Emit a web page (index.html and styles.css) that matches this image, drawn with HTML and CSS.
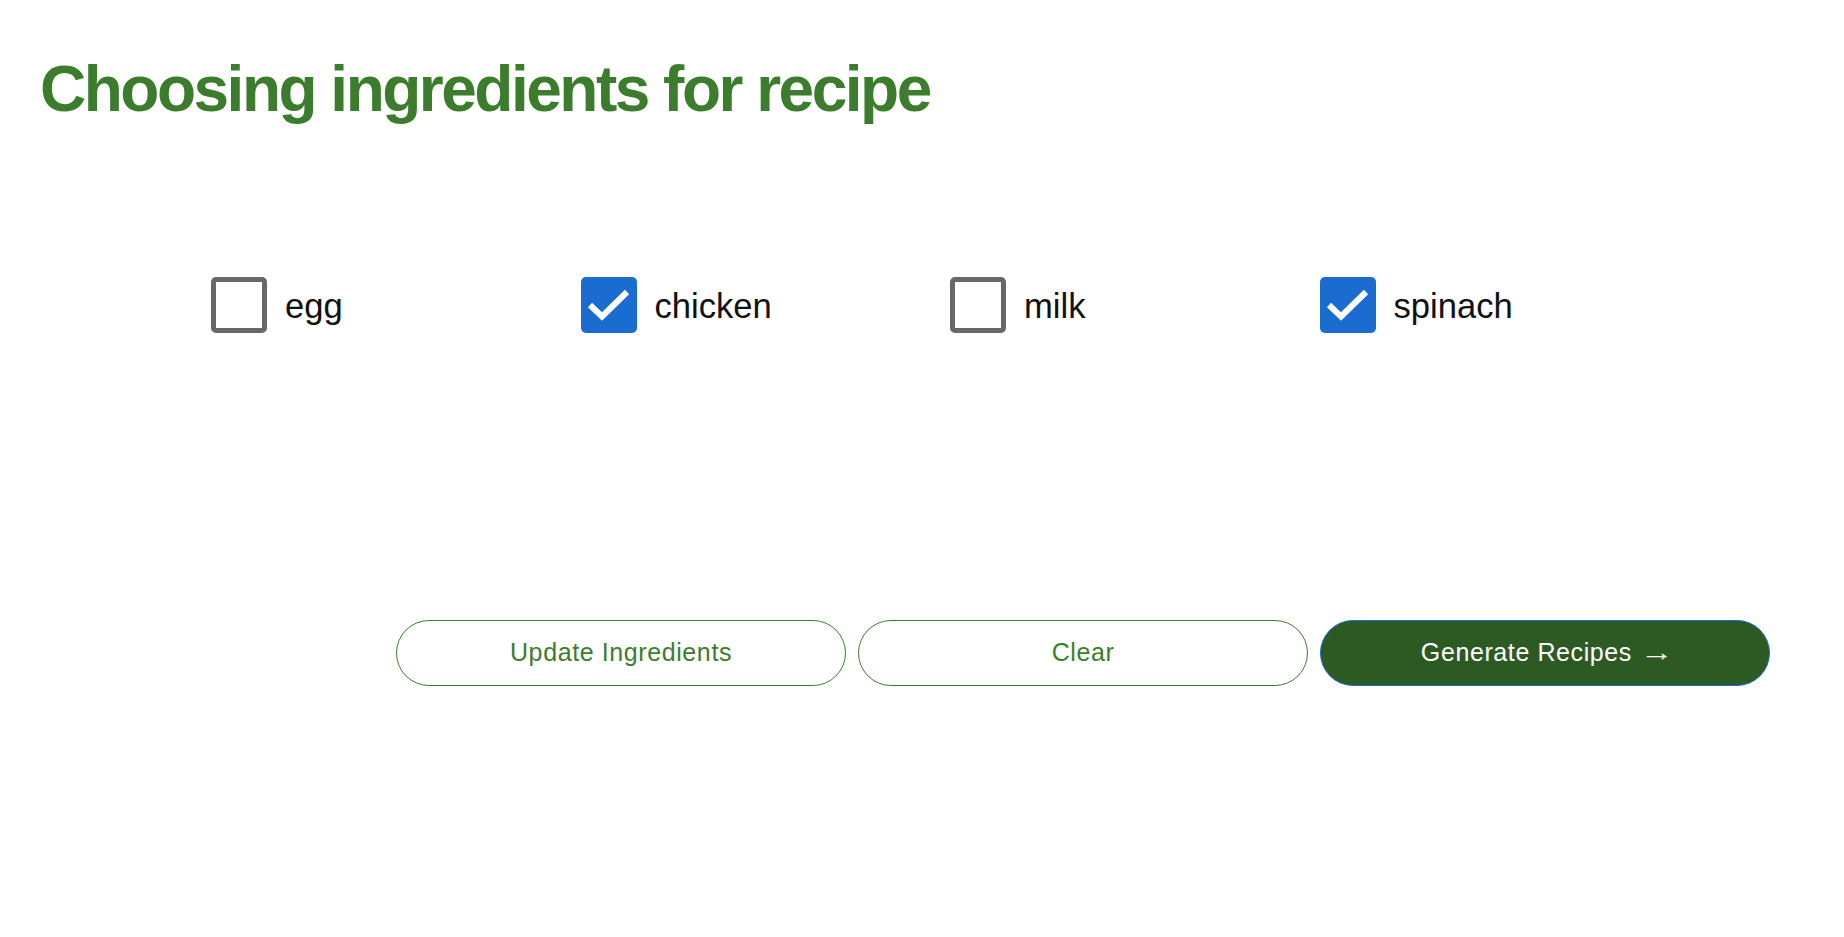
FILE: index.html
```html
<!DOCTYPE html>
<html lang="en">
<head>
<meta charset="utf-8">
<title>Choosing ingredients for recipe</title>
<link rel="stylesheet" href="styles.css">
</head>
<body>
<main class="page">
  <h1 class="title">Choosing ingredients for recipe</h1>
  <div class="ingredients">
    <label class="item"><span class="box"></span><span class="name">egg</span></label>
    <label class="item"><span class="box checked"><svg viewBox="0 0 56 56" width="56" height="56"><polyline points="9,28 21,39.5 46,15" fill="none" stroke="#fff" stroke-width="6"/></svg></span><span class="name">chicken</span></label>
    <label class="item"><span class="box"></span><span class="name">milk</span></label>
    <label class="item"><span class="box checked"><svg viewBox="0 0 56 56" width="56" height="56"><polyline points="9,28 21,39.5 46,15" fill="none" stroke="#fff" stroke-width="6"/></svg></span><span class="name">spinach</span></label>
  </div>
  <div class="actions">
    <button class="btn outline">Update Ingredients</button>
    <button class="btn outline">Clear</button>
    <button class="btn primary">Generate Recipes <span class="arrow">→</span></button>
  </div>
</main>
</body>
</html>
```
FILE: styles.css
```css
html, body {
  margin: 0;
  padding: 0;
  background: #ffffff;
}
body {
  font-family: "Liberation Sans", Arial, Helvetica, sans-serif;
}
.page {
  padding: 0 40px;
}
.title {
  margin: 53px 0 0;
  font-size: 64px;
  line-height: 72px;
  font-weight: 700;
  letter-spacing: -2.5px;
  color: #3c7d2d;
}
.ingredients {
  margin: 152px 0 0 171px;
  display: grid;
  grid-template-columns: repeat(4, 369.5px);
}
.item {
  display: flex;
  align-items: center;
  gap: 18px;
  height: 56px;
}
.box {
  box-sizing: border-box;
  width: 56px;
  height: 56px;
  border: 5.5px solid #686868;
  border-radius: 5px;
  background: #fff;
  flex: none;
}
.box.checked {
  border: none;
  background: #1b6cd1;
}
.box svg {
  display: block;
}
.name {
  font-size: 34.6px;
  color: #111;
  line-height: 40px;
  padding-top: 2px;
}
.actions {
  margin: 287px 0 0 356px;
  display: flex;
  gap: 12px;
}
.btn {
  box-sizing: border-box;
  width: 450px;
  height: 66px;
  border-radius: 33px;
  font-family: "Liberation Sans", Arial, Helvetica, sans-serif;
  font-size: 25px;
  letter-spacing: 0.6px;
  cursor: pointer;
  padding: 0 0 2px;
}
.btn.outline {
  background: #fff;
  color: #3c7d2d;
  border: 1px solid #3c7d2d;
}
.btn.primary {
  background: #2d5a22;
  color: #fff;
  border: 1px solid #1b6cd1;
}
.arrow {
  display: inline-block;
  transform: scaleX(1.35);
  transform-origin: left center;
  margin-right: 4px;
}
```
